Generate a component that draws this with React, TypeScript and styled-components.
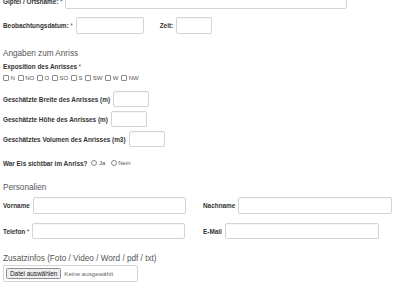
import React from 'react';
import styled, { createGlobalStyle } from 'styled-components';

const GlobalStyle = createGlobalStyle`
  html, body {
    margin: 0;
    padding: 0;
    background: #fff;
    overflow: hidden;
  }
  body {
    font-family: "Liberation Sans", Arial, sans-serif;
    color: #333;
  }
`;

const Form = styled.form`
  display: flex;
  flex-direction: column;
  padding-left: 3px;
  margin-top: -6px;
`;

const Row = styled.div<{ $top?: number; $height?: number }>`
  display: flex;
  flex-direction: row;
  align-items: center;
  gap: 3px;
  height: ${(p) => p.$height ?? 16}px;
  margin-top: ${(p) => p.$top ?? 0}px;
`;

const Label = styled.label`
  font-size: 6.4px;
  font-weight: bold;
  color: #333;
  white-space: nowrap;
`;

const Required = styled.span`
  font-weight: normal;
  color: #555;
  margin-left: 1.5px;
`;

const Input = styled.input<{ $width: number }>`
  box-sizing: border-box;
  width: ${(p) => p.$width}px;
  height: 100%;
  margin: 0;
  padding: 0 3px;
  border: 1px solid #d4d4d4;
  border-radius: 2px;
  background: #fff;
  box-shadow: inset 0 1px 1px rgba(0, 0, 0, 0.04);
  font-size: 6px;
  outline: none;
`;

const Spaced = styled.div<{ $left: number }>`
  display: flex;
  align-items: center;
  gap: 3px;
  height: 100%;
  margin-left: ${(p) => p.$left}px;
`;

const Heading = styled.h3<{ $top: number }>`
  margin: ${(p) => p.$top}px 0 0;
  font-size: 8.2px;
  line-height: 11px;
  font-weight: normal;
  color: #555;
`;

const SubLabel = styled(Label)<{ $top: number }>`
  display: block;
  line-height: 7px;
  margin-top: ${(p) => p.$top}px;
`;

const Options = styled.div<{ $top: number }>`
  display: flex;
  align-items: center;
  margin-top: ${(p) => p.$top}px;
  height: 8px;
`;

const Option = styled.label<{ $gap?: number }>`
  display: flex;
  align-items: center;
  font-size: 6px;
  color: #555;
  margin-right: ${(p) => p.$gap ?? 2.8}px;
`;

const Box = styled.span<{ $round?: boolean }>`
  display: inline-block;
  box-sizing: border-box;
  width: 6px;
  height: 6px;
  border: 0.7px solid #8a8a8a;
  border-radius: ${(p) => (p.$round ? '50%' : '1px')};
  background: #fff;
  margin-right: 1.5px;
`;

const Inline = styled.div<{ $top: number }>`
  display: flex;
  align-items: center;
  height: 8px;
  margin-top: ${(p) => p.$top}px;
  gap: 4px;
`;

const Columns = styled.div`
  display: grid;
  grid-template-columns: 200px 200px;
`;

const FileBox = styled.div`
  box-sizing: border-box;
  display: flex;
  align-items: center;
  gap: 3px;
  width: 135px;
  height: 17px;
  margin-top: 1px;
  padding: 0 2px;
  border: 1px solid #d4d4d4;
  border-radius: 2px;
`;

const FileButton = styled.button`
  font-family: "Liberation Sans", Arial, sans-serif;
  font-size: 6.4px;
  color: #222;
  height: 11px;
  padding: 0 3px;
  margin: 0;
  background: #efefef;
  border: 0.7px solid #8f8f8f;
  border-radius: 1.5px;
`;

const FileText = styled.span`
  font-size: 6.2px;
  color: #666;
`;

const directions = ['N', 'NO', 'O', 'SO', 'S', 'SW', 'W', 'NW'];

const App = () => (
  <>
    <GlobalStyle />
    <Form>
      <Row $height={15}>
        <Label>
          Gipfel / Ortsname:<Required>*</Required>
        </Label>
        <Input $width={282} />
      </Row>
      <Row $top={8} $height={17}>
        <Label>
          Beobachtungsdatum:<Required>*</Required>
        </Label>
        <Input $width={68} />
        <Spaced $left={13}>
          <Label>Zeit:</Label>
          <Input $width={36} />
        </Spaced>
      </Row>

      <Heading $top={14}>Angaben zum Anriss</Heading>
      <SubLabel $top={4}>
        Exposition des Anrisses<Required>*</Required>
      </SubLabel>
      <Options $top={4}>
        {directions.map((d) => (
          <Option key={d}>
            <Box />
            {d}
          </Option>
        ))}
      </Options>
      <Row $top={9}>
        <Label>Geschätzte Breite des Anrisses (m)</Label>
        <Input $width={36} />
      </Row>
      <Row $top={4}>
        <Label>Geschätzte Höhe des Anrisses (m)</Label>
        <Input $width={36} />
      </Row>
      <Row $top={4}>
        <Label>Geschätztes Volumen des Anrisses (m3)</Label>
        <Input $width={36} />
      </Row>
      <Inline $top={12}>
        <Label>War Eis sichtbar im Anriss?</Label>
        <Option $gap={1.5}>
          <Box $round />
          Ja
        </Option>
        <Option>
          <Box $round />
          Nein
        </Option>
      </Inline>

      <Heading $top={15}>Personalien</Heading>
      <Columns>
        <Row $top={4} $height={17}>
          <Label>Vorname</Label>
          <Input $width={153} />
        </Row>
        <Row $top={4} $height={17}>
          <Label>Nachname</Label>
          <Input $width={154} />
        </Row>
        <Row $top={9}>
          <Label>
            Telefon<Required>*</Required>
          </Label>
          <Input $width={153} />
        </Row>
        <Row $top={9}>
          <Label>E-Mail</Label>
          <Input $width={154} />
        </Row>
      </Columns>

      <Heading $top={14}>Zusatzinfos (Foto / Video / Word / pdf / txt)</Heading>
      <FileBox>
        <FileButton type="button">Datei auswählen</FileButton>
        <FileText>Keine ausgewählt</FileText>
      </FileBox>
    </Form>
  </>
);

export default App;
